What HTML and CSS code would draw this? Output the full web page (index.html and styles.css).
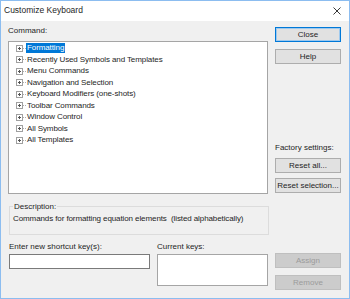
FILE: index.html
```html
<!DOCTYPE html>
<html lang="en">
<head>
    <meta charset="UTF-8">
    <title>Customize Keyboard</title>
    <link rel="stylesheet" href="styles.css">
</head>
<body>
    <div class="window">
        <div class="titlebar">
            <span class="title">Customize Keyboard</span>
            <svg class="closex" width="8" height="8" viewBox="0 0 8 8">
                <path d="M0.5 0.5 L7.5 7.5 M7.5 0.5 L0.5 7.5" stroke="#222" stroke-width="0.9" fill="none"/>
            </svg>
        </div>
        <div class="body">
            <div class="left">
                <div class="label">Command:</div>
                <ul class="tree">
                    <li class="item"><svg class="plus" width="10" height="7" viewBox="0 0 10 7"><rect x="0.5" y="0.5" width="6" height="6" fill="#fff" stroke="#a0a0a0"/><path d="M2 3.5 H5 M3.5 2 V5" stroke="#555"/><path d="M7 3.5 H10" stroke="#b0b0b0" stroke-dasharray="1 1"/></svg><span class="text selected">Formatting</span></li>
                    <li class="item"><svg class="plus" width="10" height="7" viewBox="0 0 10 7"><rect x="0.5" y="0.5" width="6" height="6" fill="#fff" stroke="#a0a0a0"/><path d="M2 3.5 H5 M3.5 2 V5" stroke="#555"/><path d="M7 3.5 H10" stroke="#b0b0b0" stroke-dasharray="1 1"/></svg><span class="text">Recently Used Symbols and Templates</span></li>
                    <li class="item"><svg class="plus" width="10" height="7" viewBox="0 0 10 7"><rect x="0.5" y="0.5" width="6" height="6" fill="#fff" stroke="#a0a0a0"/><path d="M2 3.5 H5 M3.5 2 V5" stroke="#555"/><path d="M7 3.5 H10" stroke="#b0b0b0" stroke-dasharray="1 1"/></svg><span class="text">Menu Commands</span></li>
                    <li class="item"><svg class="plus" width="10" height="7" viewBox="0 0 10 7"><rect x="0.5" y="0.5" width="6" height="6" fill="#fff" stroke="#a0a0a0"/><path d="M2 3.5 H5 M3.5 2 V5" stroke="#555"/><path d="M7 3.5 H10" stroke="#b0b0b0" stroke-dasharray="1 1"/></svg><span class="text">Navigation and Selection</span></li>
                    <li class="item"><svg class="plus" width="10" height="7" viewBox="0 0 10 7"><rect x="0.5" y="0.5" width="6" height="6" fill="#fff" stroke="#a0a0a0"/><path d="M2 3.5 H5 M3.5 2 V5" stroke="#555"/><path d="M7 3.5 H10" stroke="#b0b0b0" stroke-dasharray="1 1"/></svg><span class="text">Keyboard Modifiers (one-shots)</span></li>
                    <li class="item"><svg class="plus" width="10" height="7" viewBox="0 0 10 7"><rect x="0.5" y="0.5" width="6" height="6" fill="#fff" stroke="#a0a0a0"/><path d="M2 3.5 H5 M3.5 2 V5" stroke="#555"/><path d="M7 3.5 H10" stroke="#b0b0b0" stroke-dasharray="1 1"/></svg><span class="text">Toolbar Commands</span></li>
                    <li class="item"><svg class="plus" width="10" height="7" viewBox="0 0 10 7"><rect x="0.5" y="0.5" width="6" height="6" fill="#fff" stroke="#a0a0a0"/><path d="M2 3.5 H5 M3.5 2 V5" stroke="#555"/><path d="M7 3.5 H10" stroke="#b0b0b0" stroke-dasharray="1 1"/></svg><span class="text">Window Control</span></li>
                    <li class="item"><svg class="plus" width="10" height="7" viewBox="0 0 10 7"><rect x="0.5" y="0.5" width="6" height="6" fill="#fff" stroke="#a0a0a0"/><path d="M2 3.5 H5 M3.5 2 V5" stroke="#555"/><path d="M7 3.5 H10" stroke="#b0b0b0" stroke-dasharray="1 1"/></svg><span class="text">All Symbols</span></li>
                    <li class="item"><svg class="plus" width="10" height="7" viewBox="0 0 10 7"><rect x="0.5" y="0.5" width="6" height="6" fill="#fff" stroke="#a0a0a0"/><path d="M2 3.5 H5 M3.5 2 V5" stroke="#555"/><path d="M7 3.5 H10" stroke="#b0b0b0" stroke-dasharray="1 1"/></svg><span class="text">All Templates</span></li>
                </ul>
                <div class="desc">
                    <span class="legend">Description:</span>
                    <p class="desctext">Commands for formatting equation elements&nbsp; (listed alphabetically)</p>
                </div>
                <div class="keys">
                    <div class="field newkey">
                        <div class="label">Enter new shortcut key(s):</div>
                        <div class="input"></div>
                    </div>
                    <div class="field current">
                        <div class="label">Current keys:</div>
                        <div class="list"></div>
                    </div>
                </div>
            </div>
            <div class="right">
                <button class="btn default btn-close">Close</button>
                <button class="btn btn-help">Help</button>
                <div class="label factory">Factory settings:</div>
                <button class="btn btn-resetall">Reset all...</button>
                <button class="btn btn-resetsel">Reset selection...</button>
                <button class="btn disabled btn-assign">Assign</button>
                <button class="btn disabled btn-remove">Remove</button>
            </div>
        </div>
    </div>
</body>
</html>
```

FILE: styles.css
```css
body {
    margin: 0;
    font-family: "Liberation Sans", Arial, sans-serif;
    font-size: 8px;
    color: #1e1e1e;
}
.window {
    width: 350px;
    height: 299px;
    box-sizing: border-box;
    border: 1px solid #8cbdf0;
    background: #f0f0f0;
}
.titlebar {
    height: 20px;
    background: #fff;
    display: flex;
    align-items: center;
    justify-content: space-between;
    padding: 0 8px 0 3px;
}
.title {
    font-size: 8.5px;
    margin-top: -2px;
}
.closex {
    margin-top: -1px;
}
.body {
    display: flex;
    padding-left: 7px;
}
.left {
    width: 261px;
}
.label {
    line-height: 11px;
    white-space: nowrap;
}
.left > .label {
    margin-top: 4px;
}
.tree {
    list-style: none;
    margin: 5px 0 0 0;
    padding: 0.5px 0 0 7px;
    width: 260px;
    height: 153px;
    box-sizing: border-box;
    background: #fff;
    border: 1px solid #a5a5a5;
}
.item {
    display: flex;
    align-items: center;
    height: 11.5px;
}
.plus {
    flex: none;
}
.text {
    padding: 0 1px;
    line-height: 10px;
    letter-spacing: -0.1px;
    white-space: nowrap;
}
.selected {
    background: #0078d7;
    color: #fff;
}
.desc {
    position: relative;
    margin: 12px 0 0 1px;
    width: 260px;
    height: 29px;
    box-sizing: border-box;
    border: 1px solid #dcdcdc;
}
.legend {
    position: absolute;
    top: -6px;
    left: 3px;
    padding: 0 1px;
    line-height: 11px;
    background: #f0f0f0;
}
.desctext {
    margin: 0;
    padding: 6px 0 0 3px;
    line-height: 11px;
    letter-spacing: -0.1px;
    white-space: nowrap;
}
.keys {
    display: flex;
    gap: 7px;
    margin: 6px 0 0 1px;
}
.field .label {
    margin-bottom: 1.5px;
}
.newkey {
    width: 141px;
}
.current {
    width: 111px;
}
.input {
    height: 15px;
    box-sizing: border-box;
    background: #fff;
    border: 1px solid #7a7a7a;
}
.list {
    height: 32px;
    box-sizing: border-box;
    background: #fff;
    border: 1px solid #a5a5a5;
}
.right {
    display: flex;
    flex-direction: column;
    margin-left: 6px;
    width: 66px;
}
.btn {
    height: 15px;
    padding: 0;
    font-family: inherit;
    font-size: 8px;
    color: #1e1e1e;
    background: #e1e1e1;
    border: 1px solid #adadad;
    white-space: nowrap;
}
.default {
    border-color: #0078d7;
    box-shadow: inset 0 0 0 1px #9ec9ee;
}
.disabled {
    background: #cccccc;
    border-color: #bfbfbf;
    color: #9b9b9b;
}
.btn-close {
    margin-top: 6px;
}
.btn-help {
    margin-top: 7px;
}
.factory {
    margin-top: 77.5px;
}
.btn-resetall {
    margin-top: 5.5px;
}
.btn-resetsel {
    margin-top: 5px;
}
.btn-assign {
    margin-top: 60px;
}
.btn-remove {
    margin-top: 7px;
}
```
